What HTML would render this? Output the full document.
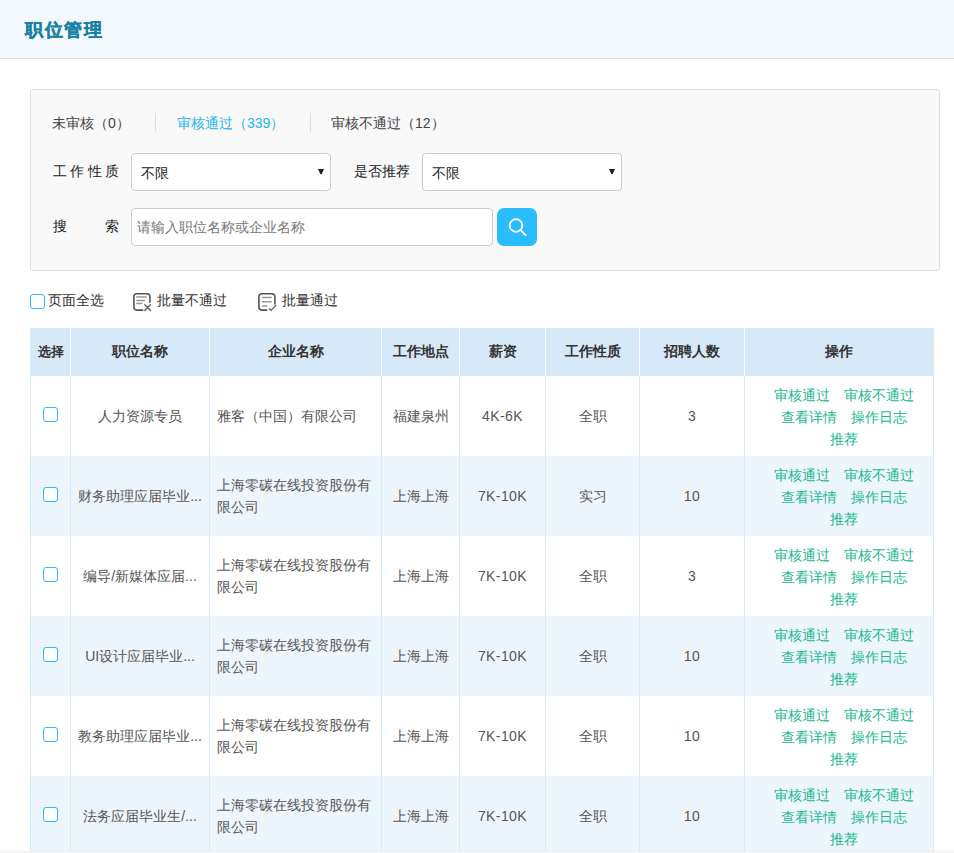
<!DOCTYPE html>
<html><head><meta charset="utf-8">
<style>
*{box-sizing:border-box;margin:0;padding:0}
html,body{width:954px;height:853px;overflow:hidden;background:#fff;font-family:"Liberation Sans",sans-serif;font-size:14px;color:#333}
.hd{position:absolute;left:0;top:0;width:954px;height:59px;background:#f3fafd;border-bottom:1px solid #dcdcdc}
.hd h1{position:absolute;left:25px;top:18px;font-size:18px;letter-spacing:1.6px;font-weight:bold;color:#1a80a4;line-height:24px;-webkit-text-stroke:0.35px #1a80a4}
.panel{position:absolute;left:30px;top:89px;width:910px;height:182px;background:#f9f9f9;border:1px solid #ddd;border-radius:3px}
.abs{position:absolute;white-space:nowrap}
.tab{font-size:14px;color:#444;line-height:20px}
.sep{position:absolute;width:1px;height:19px;background:#ddd}
.sel{position:absolute;background:#fff;border:1px solid #ccc;border-radius:4px}
.sel span{position:absolute;left:9px;top:9px;font-size:14px;line-height:20px;color:#222}
.sel i{position:absolute;right:4px;top:7px;font-style:normal;font-size:11px;line-height:20px;color:#333}
.btn{position:absolute;left:497px;top:208px;width:40px;height:38px;background:#29bdfd;border-radius:7px}
table{position:absolute;left:30px;top:328px;border-collapse:collapse;table-layout:fixed;width:904px}
th:first-child{border-left-color:#d6e9f8!important}th:last-child{border-right-color:#d6e9f8!important}
th{background:#d6e9f8;height:48px;font-weight:bold;font-size:14px;color:#333;border-left:1px solid #fff;border-right:1px solid #fff}
td{height:80px;border:1px solid #d6e9f8;border-top:none;border-bottom:none;text-align:center;font-size:14px;color:#555;line-height:22px}
tr.alt td{background:#eef6fd}
td.n{letter-spacing:0.4px}
td.co{text-align:left;padding-left:7px}
.cb{display:inline-block;width:15px;height:15px;border:1px solid #26bcfd;border-radius:3px;background:#fff;vertical-align:middle;position:relative;top:-3px}
.op{color:#18b890;line-height:22px;padding-left:9px;padding-top:1px}
.op a{color:#18b890;text-decoration:none;margin:0 7px}
.foot{position:absolute;left:0;top:851px;width:954px;height:2px;background:#f8f8f8;border-top:1px solid #efefef}
</style></head><body>
<div class="hd"><h1>职位管理</h1></div>
<div class="panel"></div>
<div class="abs tab" style="left:52px;top:113px">未审核（0）</div>
<div class="sep" style="left:155px;top:113px"></div>
<div class="abs tab" style="left:177px;top:113px;color:#22b4f2">审核通过（339）</div>
<div class="sep" style="left:310px;top:113px"></div>
<div class="abs tab" style="left:331px;top:113px">审核不通过（12）</div>

<div class="abs tab" style="left:52.5px;top:161px;color:#222;letter-spacing:3.5px">工作性质</div>
<div class="sel" style="left:131px;top:153px;width:200px;height:38px"><span>不限</span><svg style="position:absolute;left:185px;top:14px" width="8" height="8" viewBox="0 0 8 8"><polygon points="1,1 7,1 4.6,6.2 3.4,6.2" fill="#222"/></svg></div>
<div class="abs tab" style="left:354px;top:161px;color:#222">是否推荐</div>
<div class="sel" style="left:422px;top:153px;width:200px;height:38px"><span>不限</span><svg style="position:absolute;left:185px;top:14px" width="8" height="8" viewBox="0 0 8 8"><polygon points="1,1 7,1 4.6,6.2 3.4,6.2" fill="#222"/></svg></div>

<div class="abs tab" style="left:53px;top:216px;color:#222">搜</div>
<div class="abs tab" style="left:105px;top:216px;color:#222">索</div>
<div class="sel" style="left:131px;top:208px;width:362px;height:38px"><span style="left:5px;top:8px;color:#777">请输入职位名称或企业名称</span></div>
<div class="btn"><svg width="40" height="38" viewBox="0 0 40 38"><circle cx="19" cy="17.5" r="6.3" fill="none" stroke="#fff" stroke-width="1.8"/><line x1="23.5" y1="22" x2="28.6" y2="27.1" stroke="#fff" stroke-width="1.8" stroke-linecap="round"/></svg></div>

<div class="abs" style="left:30px;top:294px;width:15px;height:15px;border:1px solid #26bcfd;border-radius:3px"></div>
<div class="abs tab" style="left:48px;top:290px;color:#333">页面全选</div>
<svg class="abs" style="left:130px;top:290px" width="24" height="24" viewBox="0 0 24 24" fill="none" stroke-linecap="round"><path d="M19.9 12.3V6.7a3 3 0 0 0-3-3H6.9a3 3 0 0 0-3 3V17.1a3 3 0 0 0 3 3H12.8" stroke="#555" stroke-width="1.6"/><path d="M6.8 7H16.2M6.8 10.5H14.4M6.8 13.6H12" stroke="#9a9a9a" stroke-width="1.5"/><path d="M14.8 14.8L20.4 20.4M20.4 14.8L14.8 20.4" stroke="#666" stroke-width="1.5"/></svg>
<div class="abs tab" style="left:157px;top:290px;color:#333">批量不通过</div>
<svg class="abs" style="left:255px;top:290px" width="24" height="24" viewBox="0 0 24 24" fill="none" stroke-linecap="round" stroke-linejoin="round"><path d="M19.9 13.9V6.7a3 3 0 0 0-3-3H6.9a3 3 0 0 0-3 3V17.1a3 3 0 0 0 3 3H11.8" stroke="#555" stroke-width="1.6"/><path d="M7.6 7.6H16.2M7.6 11.8H16.2M7.6 16H11.8" stroke="#9a9a9a" stroke-width="1.5"/><path d="M14.4 18.8L16 20.4L20.7 15.4" stroke="#777" stroke-width="1.5"/></svg>
<div class="abs tab" style="left:282px;top:290px;color:#333">批量通过</div>

<table>
<colgroup><col style="width:40px"><col style="width:139px"><col style="width:172px"><col style="width:78px"><col style="width:86px"><col style="width:94px"><col style="width:105px"><col style="width:189px"></colgroup>
<tr><th style="font-size:13px">选择</th><th>职位名称</th><th>企业名称</th><th>工作地点</th><th>薪资</th><th>工作性质</th><th>招聘人数</th><th>操作</th></tr>
<tr><td><span class="cb"></span></td><td>人力资源专员</td><td class="co">雅客（中国）有限公司</td><td>福建泉州</td><td class="n">4K-6K</td><td>全职</td><td class="n">3</td><td class="op"><a>审核通过</a><a>审核不通过</a><br><a>查看详情</a><a>操作日志</a><br><a>推荐</a></td></tr>
<tr class="alt"><td><span class="cb"></span></td><td>财务助理应届毕业...</td><td class="co">上海零碳在线投资股份有限公司</td><td>上海上海</td><td class="n">7K-10K</td><td>实习</td><td class="n">10</td><td class="op"><a>审核通过</a><a>审核不通过</a><br><a>查看详情</a><a>操作日志</a><br><a>推荐</a></td></tr>
<tr><td><span class="cb"></span></td><td>编导/新媒体应届...</td><td class="co">上海零碳在线投资股份有限公司</td><td>上海上海</td><td class="n">7K-10K</td><td>全职</td><td class="n">3</td><td class="op"><a>审核通过</a><a>审核不通过</a><br><a>查看详情</a><a>操作日志</a><br><a>推荐</a></td></tr>
<tr class="alt"><td><span class="cb"></span></td><td>UI设计应届毕业...</td><td class="co">上海零碳在线投资股份有限公司</td><td>上海上海</td><td class="n">7K-10K</td><td>全职</td><td class="n">10</td><td class="op"><a>审核通过</a><a>审核不通过</a><br><a>查看详情</a><a>操作日志</a><br><a>推荐</a></td></tr>
<tr><td><span class="cb"></span></td><td>教务助理应届毕业...</td><td class="co">上海零碳在线投资股份有限公司</td><td>上海上海</td><td class="n">7K-10K</td><td>全职</td><td class="n">10</td><td class="op"><a>审核通过</a><a>审核不通过</a><br><a>查看详情</a><a>操作日志</a><br><a>推荐</a></td></tr>
<tr class="alt"><td><span class="cb"></span></td><td>法务应届毕业生/...</td><td class="co">上海零碳在线投资股份有限公司</td><td>上海上海</td><td class="n">7K-10K</td><td>全职</td><td class="n">10</td><td class="op"><a>审核通过</a><a>审核不通过</a><br><a>查看详情</a><a>操作日志</a><br><a>推荐</a></td></tr>
</table>
<div class="foot"></div>
</body></html>
